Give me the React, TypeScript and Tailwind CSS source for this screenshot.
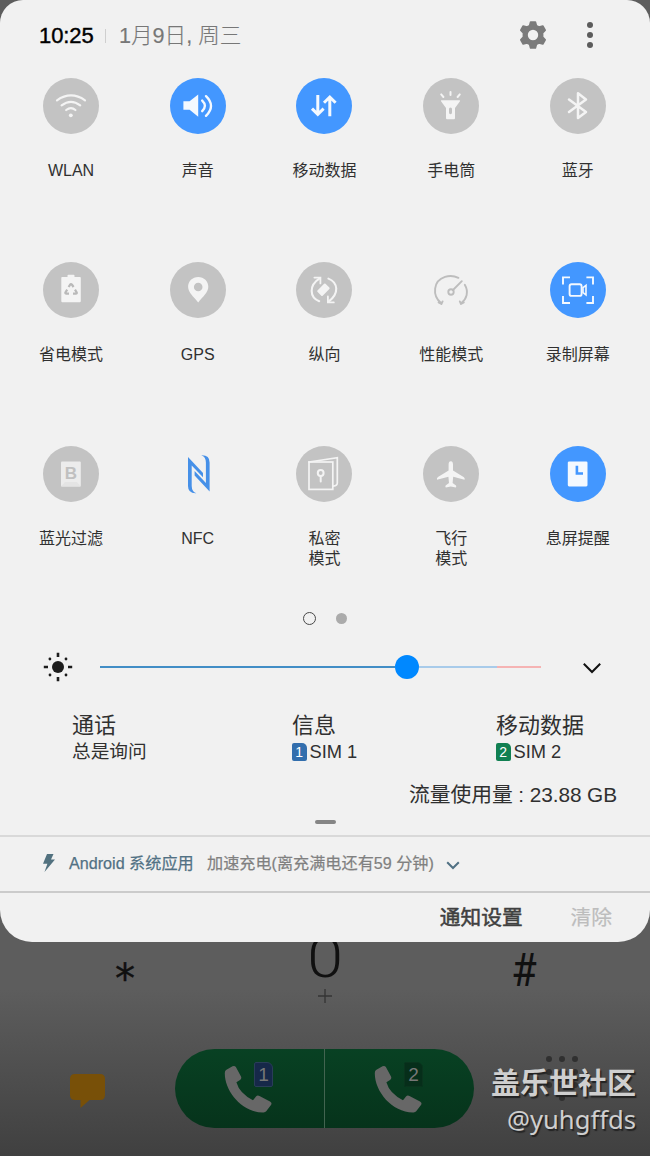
import type { ReactNode } from "react";

const stroke = {
  fill: "none",
  stroke: "currentColor",
  strokeLinecap: "round" as const,
  strokeLinejoin: "round" as const,
};

const NFC_HALF =
  "M18 11 L33 27 V31.3 L21.7 19.5 V40 Q21.8 45.6 26.3 47.2 Q18 47.6 18 40 Z";

const icons: Record<string, ReactNode> = {
  wlan: (
    <g {...stroke} strokeWidth={2.2}>
      <path d="M14 22.3 Q28 12.6 42 22.3" />
      <path d="M18.6 27.4 Q28 20.2 37.2 27.4" />
      <path d="M23.2 32 Q28 28.3 32.4 32" />
      <circle cx="27.8" cy="37.3" r="1.9" fill="currentColor" stroke="none" />
    </g>
  ),
  sound: (
    <g {...stroke} strokeWidth={2.4}>
      <path d="M13.4 23.3 H19.6 L28.2 16.6 V38.8 L19.6 31.8 H13.4 Z" fill="currentColor" stroke="none" />
      <path d="M32.2 22.6 Q37.6 27.8 32.2 33.2" />
      <path d="M36 18.2 Q46 27.8 36 37.8" />
    </g>
  ),
  data: (
    <g {...stroke} strokeWidth={3} strokeLinecap="butt" strokeLinejoin="miter">
      <path d="M21.8 17 V36 M16 30.6 L21.8 36.4 L27.6 30.6" />
      <path d="M33.8 38.2 V20 M28 24.8 L33.8 19 L39.6 24.8" />
    </g>
  ),
  torch: (
    <g fill="currentColor">
      <path
        fillRule="evenodd"
        d="M18.4 22.3 H36.6 Q37.6 22.4 36.8 23.6 L32 30 V40 Q32 41.3 31 41.3 H24 Q23 41.3 23 40 V30 L18.2 23.6 Q17.4 22.4 18.4 22.3 Z M27.5 29.4 Q26 29.4 26 31 V34.6 Q26 36.2 27.5 36.2 Q29 36.2 29 34.6 V31 Q29 29.4 27.5 29.4 Z"
      />
      <path d="M27.5 14 V17 M18.2 16.4 L20.4 19 M36.8 16.4 L34.6 19" {...stroke} strokeWidth={2} />
    </g>
  ),
  bluetooth: (
    <path d="M19 21.6 L36 34 L28 40 V15.2 L36 21.4 L19 34" {...stroke} strokeWidth={2.5} />
  ),
  battery: (
    <g>
      <path
        d="M19 15 H24.5 V13.6 Q24.5 12.8 25.4 12.8 H30.6 Q31.5 12.8 31.5 13.6 V15 H37 Q37.8 15 37.8 16 V39 Q37.8 40.2 36.6 40.2 H19.4 Q18.3 40.2 18.3 39 V16 Q18.3 15 19 15 Z"
        fill="currentColor"
      />
      <path
        d="M25.6 25 L27 22.8 Q28 21.6 29 22.8 L30.6 25 M24.2 27.6 L22.4 30.4 Q22 31.6 23.4 31.6 H26 M32 27.6 L33.7 30.4 Q34.2 31.6 32.8 31.6 H30"
        fill="none"
        stroke="#b9b9b9"
        strokeWidth="2.2"
      />
    </g>
  ),
  pin: (
    <path
      fill="currentColor"
      fillRule="evenodd"
      d="M28.2 15 C22.4 15 18.1 19.4 18.1 24.8 C18.1 30.5 23.6 34.6 28.2 40.5 C32.8 34.6 38.3 30.5 38.3 24.8 C38.3 19.4 34 15 28.2 15 Z M28.2 20.7 A4.3 4.3 0 1 1 28.2 29.3 A4.3 4.3 0 1 1 28.2 20.7 Z"
    />
  ),
  rotate: (
    <g {...stroke} strokeWidth={2.1}>
      <path d="M23.2 39.2 C13.4 35 12.8 23.5 23.6 16.4" />
      <path d="M18.4 15.6 H24.4 V21.4" strokeWidth={1.8} strokeLinejoin="miter" />
      <path d="M32.4 16.6 C42.2 20.6 43.4 31.5 32.6 39.6" />
      <path d="M31.9 34.4 V40.4 H37.8" strokeWidth={1.8} strokeLinejoin="miter" />
      <rect x="21.7" y="24" width="11.4" height="7.4" rx="1" transform="rotate(-45 27.4 27.7)" fill="currentColor" stroke="none" />
    </g>
  ),
  gauge: (
    <g {...stroke} strokeWidth={1.9}>
      <path d="M15.6 40.4 L18.4 42 L19.6 39.4 M18 41 C9 33.5 10 18.8 22 14.9 Q29 12.8 35.4 15.8" />
      <path d="M41.8 22.8 C46 30 43.6 37 38.4 41 M40.8 40.4 L38 42 L36.8 39.4" />
      <circle cx="28" cy="30" r="2.7" />
      <path d="M30 28 L38.8 19.2" />
    </g>
  ),
  record: (
    <g {...stroke} strokeWidth={1.9} strokeLinecap="butt" strokeLinejoin="miter">
      <path d="M20 15.4 H13 V22.4 M36.4 15.4 H43 V22.4 M13 34 V41 H20 M43 34 V41 H36.4" />
      <rect x="19.6" y="22.3" width="12" height="11.6" rx="2" />
      <path d="M36 23.4 V32.9 L33 30.6 V25.7 Z" strokeWidth={1.6} />
    </g>
  ),
  filter: (
    <g>
      <rect x="18" y="15.4" width="19.8" height="25" rx="1" fill="#ececec" />
      <path d="M18 40.4 L22 36 H34 L37.8 40.4 Z" fill="#e4e4e4" />
      <text x="28" y="33.2" textAnchor="middle" fontSize="17" fontWeight="700" fill="#c0c0c0">
        B
      </text>
    </g>
  ),
  nfc: (
    <g fill="#4690e8">
      <path d={NFC_HALF} />
      <path d={NFC_HALF} transform="rotate(180 28.8 28.2)" />
    </g>
  ),
  vault: (
    <g {...stroke} strokeWidth={1.7} strokeLinejoin="miter">
      <rect x="13" y="16" width="23.8" height="27.4" />
      <path d="M13 16 L41.3 11.7 V37 Q41.3 39.7 37.4 40.2" />
      <circle cx="24.7" cy="27" r="2.9" strokeWidth={2} />
      <path d="M24.7 30 V35.4" strokeWidth={2} />
    </g>
  ),
  plane: (
    <path
      fill="currentColor"
      d="M27.8 15.2 C29.6 15.2 30 17 30 18.6 V24.6 L40.6 31 Q42.2 32.2 41.6 33.8 L30.2 30.8 L29.6 37 L33 39.6 Q33.6 40.6 32.8 41.4 L27.8 40.4 L22.8 41.4 Q22 40.6 22.6 39.6 L26 37 L25.4 30.8 L14 33.8 Q13.4 32.2 15 31 L25.6 24.6 V18.6 C25.6 17 26 15.2 27.8 15.2 Z"
    />
  ),
  aod: (
    <g>
      <rect x="17.8" y="15.4" width="19.7" height="25" rx="1.3" fill="currentColor" />
      <path d="M26.9 19.8 V27.5 H33" fill="none" stroke="#4397ff" strokeWidth="2.6" />
    </g>
  ),
};

type Tile = { icon: string; label: string; kind?: "on" | "bare" };

const tiles: Tile[] = [
  { icon: "wlan", label: "WLAN" },
  { icon: "sound", label: "声音", kind: "on" },
  { icon: "data", label: "移动数据", kind: "on" },
  { icon: "torch", label: "手电筒" },
  { icon: "bluetooth", label: "蓝牙" },
  { icon: "battery", label: "省电模式" },
  { icon: "pin", label: "GPS" },
  { icon: "rotate", label: "纵向" },
  { icon: "gauge", label: "性能模式", kind: "bare" },
  { icon: "record", label: "录制屏幕", kind: "on" },
  { icon: "filter", label: "蓝光过滤" },
  { icon: "nfc", label: "NFC", kind: "bare" },
  { icon: "vault", label: "私密\n模式" },
  { icon: "plane", label: "飞行\n模式" },
  { icon: "aod", label: "息屏提醒", kind: "on" },
];

const tileColors = {
  on: "bg-[#4397ff] text-[#f4f9ff]",
  off: "bg-[#c3c3c3] text-[#f4f4f4]",
  bare: "text-[#bdbdbd]",
};

function QuickTile({ icon, label, kind }: Tile) {
  return (
    <div className="flex h-[184px] flex-col items-center">
      <div className={`size-14 rounded-full ${tileColors[kind ?? "off"]}`}>
        <svg viewBox="0 0 56 56" className="size-14">
          {icons[icon]}
        </svg>
      </div>
      <div className="mt-[27px] text-center text-base leading-5 whitespace-pre-line text-[#303030]">
        {label}
      </div>
    </div>
  );
}

function SimBadge({ n, className }: { n: string; className: string }) {
  return (
    <span
      className={`flex h-[18px] w-[14.5px] items-center justify-center rounded-[2px] rounded-tr-[5px] text-[14px] leading-none text-white ${className}`}
    >
      {n}
    </span>
  );
}

function CallHalf({ n, badge }: { n: string; badge: string }) {
  return (
    <div className="relative h-full flex-1">
      <svg viewBox="0 0 48 48" className="absolute top-[16px] left-[49px] size-12 text-[#676767]">
        <path
          fill="currentColor"
          d="M2 5 L8.5 1.2 Q10.8 0.2 12 2.3 L17 11.5 Q18 13.7 16 15 L12.4 17.3 Q15.5 28.5 29 35.2 L32 31.5 Q33.5 30 35.5 31 L46 36.6 Q48.4 38 47 40 L42.2 46.2 Q41.4 47.3 39.5 47.4 C18 47.8 0.5 26 0.8 8 Q0.8 6 2 5 Z"
        />
      </svg>
      <span
        className={`absolute top-[13px] left-[79px] flex h-[25px] w-[19px] items-center justify-center rounded-[2px] rounded-tr-[6px] border text-[19px] leading-none text-[#777] ${badge}`}
      >
        {n}
      </span>
    </div>
  );
}

export default function App() {
  return (
    <div className="relative flex h-[1156px] w-[650px] flex-col overflow-hidden bg-[linear-gradient(#5d5d5d_0px,#5d5d5d_990px,#404040_1156px)] font-['Liberation_Sans','Noto_Sans_CJK_SC',sans-serif]">
      <main className="flex h-[942px] shrink-0 flex-col rounded-t-[23px] rounded-b-[32px] bg-[#f1f1f1]">
        <header className="flex h-[78px] shrink-0 items-start pl-[39px]">
          <div className="mt-[21px] flex items-center leading-[30px]">
            <span className="w-[66px] text-[22px] tracking-[-0.1px] text-black [-webkit-text-stroke:0.4px_black]">10:25</span>
            <span className="h-[14px] w-px bg-[#cfcfcf]" />
            <span className="ml-[13px] text-[21.6px] font-light whitespace-nowrap text-[#777] [-webkit-text-stroke:0.15px_#777]">1月9日, 周三</span>
          </div>
          <svg viewBox="0 0 28 28" className="mt-[21px] ml-auto size-7 text-[#7b7b7b]">
            <path
              fill="currentColor"
              stroke="currentColor"
              strokeWidth="1.6"
              strokeLinejoin="round"
              fillRule="evenodd"
              d="M11.6 1 H16.4 L17.4 4.6 L20 6 L23.8 5 L26.2 9.2 L23.6 12 V16 L26.2 18.8 L23.8 23 L20 22 L17.4 23.4 L16.4 27 H11.6 L10.6 23.4 L8 22 L4.2 23 L1.8 18.8 L4.4 16 V12 L1.8 9.2 L4.2 5 L8 6 L10.6 4.6 Z M14 8 A6 6 0 1 0 14 20 A6 6 0 1 0 14 8 Z"
            />
          </svg>
          <div className="mt-[22px] mr-[57px] ml-[40px] flex flex-col gap-[4px]">
            <i className="size-[6px] rounded-full bg-[#5c5c5c]" />
            <i className="size-[6px] rounded-full bg-[#5c5c5c]" />
            <i className="size-[6px] rounded-full bg-[#5c5c5c]" />
          </div>
        </header>

        <section className="ml-[7.7px] grid h-[534px] w-[633.5px] shrink-0 grid-cols-5">
          {tiles.map((t) => (
            <QuickTile key={t.icon} {...t} />
          ))}
        </section>

        <div className="mr-px flex h-[13px] shrink-0 items-center justify-center gap-[20px]">
          <i className="size-[13px] rounded-full border-[1.5px] border-[#484848]" />
          <i className="size-[11px] rounded-full bg-[#ababab]" />
        </div>

        <div className="mt-[26px] flex h-[32px] shrink-0 items-center pl-[42.5px]">
          <svg viewBox="0 0 30 30" className="size-[30px] text-[#1c1c1c]">
            <circle cx="15" cy="15" r="6" fill="currentColor" />
            <path d="M15 .8 V5 M15 25 V29.2 M.8 15 H5 M25 15 H29.2" stroke="currentColor" strokeWidth="2.6" />
            <g fill="currentColor">
              <circle cx="6.9" cy="7" r="1.4" />
              <circle cx="23" cy="7" r="1.4" />
              <circle cx="7" cy="23" r="1.4" />
              <circle cx="23" cy="23" r="1.4" />
            </g>
          </svg>
          <div className="ml-[27.5px] flex w-[441px] items-center">
            <i className="h-[2px] w-[295px] bg-[#428ec6]" />
            <i className="size-[23.5px] rounded-full bg-[#0088ff]" />
            <i className="h-[2px] w-[78px] bg-[#a8cbea]" />
            <i className="h-[2px] flex-1 bg-[#f5b3b3]" />
          </div>
          <svg viewBox="0 0 20 12" className="mt-px ml-[41px] h-3 w-5">
            <path d="M1.8 1.8 L10 10 L18.2 1.8" fill="none" stroke="#111" strokeWidth="2" />
          </svg>
        </div>

        <div className="mt-[26px] grid h-[58px] shrink-0 grid-cols-[220px_204px_1fr] pl-[72px] text-[#303030]">
          <div>
            <div className="text-[22px] leading-[33px]">通话</div>
            <div className="text-[18.7px] leading-[20px]">总是询问</div>
          </div>
          <div>
            <div className="text-[22px] leading-[33px]">信息</div>
            <div className="flex items-center gap-[3px] text-[18.3px] leading-[20px]">
              <SimBadge n="1" className="bg-[#326ead]" />
              SIM 1
            </div>
          </div>
          <div>
            <div className="text-[22px] leading-[33px]">移动数据</div>
            <div className="flex items-center gap-[3px] text-[18.3px] leading-[20px]">
              <SimBadge n="2" className="bg-[#118052]" />
              SIM 2
            </div>
          </div>
        </div>

        <div className="mt-[8px] mr-[33px] h-[40px] shrink-0 text-right text-[20.8px] leading-[40px] tracking-[-0.08px] text-[#303030]">
          流量使用量 : 23.88 GB
        </div>
        <i className="mx-auto mt-[4.5px] h-[4px] w-[21px] shrink-0 rounded-full bg-[#858585]" />

        <div className="mt-auto flex h-[58px] shrink-0 items-center border-y-2 border-t-[#d9d9d9] border-b-[#cbcbcb] text-base">
          <svg viewBox="0 0 12 18" className="mb-[2px] ml-[43px] h-[18px] w-3">
            <path d="M4 0 H10.5 L8 5.5 H12 L1.5 18 L4.4 9.8 H0 Z" fill="#52717f" />
          </svg>
          <span className="mb-[2px] ml-[14px] w-[138px] text-[16.15px] whitespace-nowrap text-[#517184] [-webkit-text-stroke:0.25px_#517184]">Android 系统应用</span>
          <span className="mb-[2px] w-[229px] text-[16.15px] whitespace-nowrap text-[#808080] [-webkit-text-stroke:0.2px_#808080]">加速充电(离充满电还有59 分钟)</span>
          <svg viewBox="0 0 14 9" className="mt-[3px] ml-[10px] h-[9px] w-[14px]">
            <path d="M1.2 1.2 L7 7 L12.8 1.2" fill="none" stroke="#517184" strokeWidth="2" />
          </svg>
        </div>
        <footer className="flex h-[49px] shrink-0 items-center justify-end gap-[48px] pr-[38px] text-[20.7px]">
          <button className="text-[#404040] [-webkit-text-stroke:0.5px_#404040]">通知设置</button>
          <button className="text-[#bdbdbd] [-webkit-text-stroke:0.2px_#bdbdbd]">清除</button>
        </footer>
      </main>

      <section className="grid h-[107px] shrink-0 grid-cols-[200px_1fr_200px] overflow-hidden px-[25px] text-center font-[Roboto,sans-serif] text-[#101010]">
        <div className="mt-[15px] font-['DejaVu_Sans',sans-serif] text-[40px] leading-[44px] [-webkit-text-stroke:0.4px_#101010]">*</div>
        <div className="mt-[-16px]">
          <div className="scale-x-[1.15] text-[56px] leading-[64px] font-light">0</div>
          <svg viewBox="0 0 14 14" className="mx-auto mt-[-1px] size-[14px]">
            <path d="M7 0 V14 M0 7 H14" stroke="#343434" strokeWidth="1.3" />
          </svg>
        </div>
        <div className="mt-[3px] mr-[2px] scale-x-90 text-[46px] leading-[50px]">#</div>
      </section>

      <section className="flex h-[79px] shrink-0 items-center">
        <svg viewBox="0 0 36 34" className="mt-[4px] ml-[70px] h-[34px] w-9">
          <path d="M5 0 H30 Q35 0 35 5 V21 Q35 26 30 26 H19.5 L10.5 34 V26 H5 Q0 26 0 21 V5 Q0 0 5 0 Z" fill="#785008" />
        </svg>
        <div className="ml-[69px] flex h-[79px] w-[299px] overflow-hidden rounded-full bg-[linear-gradient(#084123,#06331b)]">
          <CallHalf n="1" badge="border-[#293d58] bg-[#162849]" />
          <i className="h-full w-px bg-[#426450]" />
          <CallHalf n="2" badge="border-[#0a341e] bg-[#062e1a]" />
        </div>
        <div className="mb-[20px] ml-[72px] grid grid-cols-3 gap-x-[7px] gap-y-[7px]">
          {["a", "b", "c", "d", "e", "f", "g", "h", "i"].map((k) => (
            <i key={k} className="size-[6px] rounded-full bg-[#303030]" />
          ))}
          <i className="col-start-2 size-[6px] rounded-full bg-[#303030]" />
        </div>
      </section>

      <div className="absolute right-[14px] bottom-[19px] text-right whitespace-nowrap text-[#cfcfcf] [text-shadow:1.5px_1.5px_1px_#222]">
        <div className="text-[29px] leading-[38px] font-bold">盖乐世社区</div>
        <div className="font-['Noto_Sans',sans-serif] text-[25.6px] leading-[34px]">@yuhgffds</div>
      </div>
    </div>
  );
}
